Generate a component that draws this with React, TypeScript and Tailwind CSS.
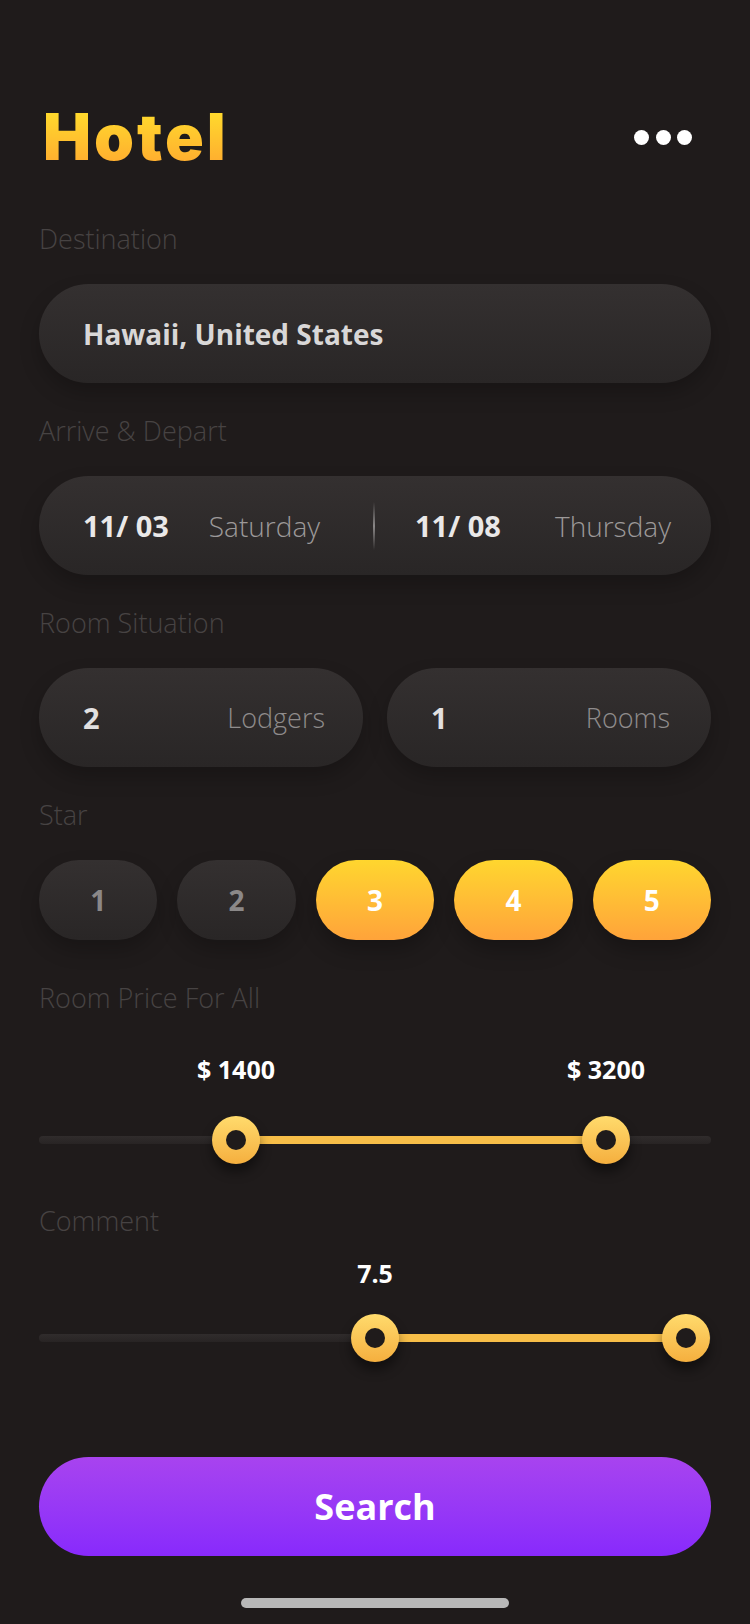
import React from "react";

const FONT = { fontFamily: '"Open Sans", "Liberation Sans", sans-serif' };

function Label({ children }: { children: React.ReactNode }) {
  return (
    <div className="h-[30px] flex items-center text-[27px] font-light text-[#474343] leading-none">
      {children}
    </div>
  );
}

function Handle({ left }: { left: number }) {
  return (
    <div
      className="absolute top-0 w-[48px] h-[48px] -ml-[24px] rounded-full bg-gradient-to-b from-[#FFDB6C] to-[#F5AF3E] flex items-center justify-center shadow-[0_8px_12px_rgba(0,0,0,0.45)]"
      style={{ left: `${left}%` }}
    >
      <div className="w-[20px] h-[20px] rounded-full bg-[#1f1b1b]" />
    </div>
  );
}

function Track({ a, b }: { a: number; b: number }) {
  const pa = ((a - 39) / 672) * 100;
  const pb = ((b - 39) / 672) * 100;
  return (
    <div className="relative h-[48px]">
      <div className="absolute left-0 right-0 top-[20px] h-[8px] rounded-full bg-gradient-to-b from-[#302c2c] to-[#282424]" />
      <div
        className="absolute top-[20px] h-[8px] bg-[#F7BE48]"
        style={{ left: `${pa}%`, width: `${pb - pa}%` }}
      />
      <Handle left={pa} />
      <Handle left={pb} />
    </div>
  );
}

function Values({ items }: { items: { x: number; text: string }[] }) {
  return (
    <div className="relative h-[30px]">
      {items.map((l) => (
        <div
          key={l.text}
          className="absolute top-0 h-[30px] flex items-center -translate-x-1/2 whitespace-nowrap text-[25px] font-bold text-white leading-none"
          style={{ left: `${((l.x - 39) / 672) * 100}%` }}
        >
          {l.text}
        </div>
      ))}
    </div>
  );
}

const box =
  "rounded-full bg-gradient-to-b from-[#343030] to-[#292626] shadow-[0_10px_20px_rgba(0,0,0,0.22)]";

export default function App() {
  return (
    <div
      className="w-[750px] h-[1624px] bg-[#1f1b1b] overflow-hidden"
      style={FONT}
    >
      <div className="px-[39px]">
        {/* Header */}
        <div className="mt-[107px] h-[60px] flex items-center justify-between">
          <div
            className="ml-[4px] text-[64px] font-black leading-none tracking-[3px] bg-gradient-to-b from-[#FFE02C] to-[#FFA82F] bg-clip-text text-transparent"
            style={{ fontFamily: 'Inter, "DejaVu Sans", sans-serif' }}
          >
            Hotel
          </div>
          <div className="mr-[19px] flex items-center gap-[6.5px]">
            <div className="w-[15px] h-[15px] rounded-full bg-white" />
            <div className="w-[15px] h-[15px] rounded-full bg-white" />
            <div className="w-[15px] h-[15px] rounded-full bg-white" />
          </div>
        </div>

        {/* Destination */}
        <div className="mt-[56px]">
          <Label>Destination</Label>
        </div>
        <div className={`mt-[31px] h-[99px] ${box} flex items-center pl-[44px]`}>
          <span className="text-[28px] font-bold text-[#d9d7d7] leading-none">
            Hawaii, United States
          </span>
        </div>

        {/* Arrive & Depart */}
        <div className="mt-[32px]">
          <Label>Arrive &amp; Depart</Label>
        </div>
        <div className={`mt-[31px] h-[99px] ${box} flex items-center`}>
          <div className="w-[334px] flex items-center pl-[44px]">
            <span className="text-[29px] font-bold text-[#eae8e8] leading-none">
              11/ 03
            </span>
            <span className="ml-[40px] text-[28px] font-light text-[#9c9999] leading-none">
              Saturday
            </span>
          </div>
          <div className="w-[2px] h-[48px] bg-gradient-to-b from-transparent via-[#8a8787] to-transparent" />
          <div className="flex-1 flex items-center justify-between pl-[40px] pr-[40px]">
            <span className="text-[29px] font-bold text-[#eae8e8] leading-none">
              11/ 08
            </span>
            <span className="text-[28px] font-light text-[#9c9999] leading-none">
              Thursday
            </span>
          </div>
        </div>

        {/* Room Situation */}
        <div className="mt-[32px]">
          <Label>Room Situation</Label>
        </div>
        <div className="mt-[31px] grid grid-cols-2 gap-[24px]">
          <div className={`h-[99px] ${box} flex items-center justify-between pl-[44px] pr-[38px]`}>
            <span className="text-[29px] font-bold text-[#e2e0e0] leading-none">2</span>
            <span className="text-[27px] font-light text-[#8f8c8c] leading-none">
              Lodgers
            </span>
          </div>
          <div className={`h-[99px] ${box} flex items-center justify-between pl-[44px] pr-[41px]`}>
            <span className="text-[29px] font-bold text-[#e2e0e0] leading-none">1</span>
            <span className="text-[27px] font-light text-[#8f8c8c] leading-none">
              Rooms
            </span>
          </div>
        </div>

        {/* Star */}
        <div className="mt-[32px]">
          <Label>Star</Label>
        </div>
        <div className="mt-[31px] grid grid-cols-5 gap-[20px]">
          {[1, 2, 3, 4, 5].map((n) =>
            n < 3 ? (
              <div
                key={n}
                className={`h-[80px] ${box} flex items-center justify-center text-[28px] font-bold text-[#8b8888] leading-none`}
              >
                {n}
              </div>
            ) : (
              <div
                key={n}
                className="h-[80px] rounded-full bg-gradient-to-b from-[#FFD62E] to-[#FFA33A] flex items-center justify-center text-[28px] font-bold text-white leading-none shadow-[0_10px_20px_rgba(0,0,0,0.25)]"
              >
                {n}
              </div>
            )
          )}
        </div>

        {/* Room Price */}
        <div className="mt-[42px]">
          <Label>Room Price For All</Label>
        </div>
        <div className="mt-[42px]">
          <Values
            items={[
              { x: 236, text: "$ 1400" },
              { x: 606, text: "$ 3200" },
            ]}
          />
        </div>
        <div className="mt-[32px]">
          <Track a={236} b={606} />
        </div>

        {/* Comment */}
        <div className="mt-[41px]">
          <Label>Comment</Label>
        </div>
        <div className="mt-[23px]">
          <Values items={[{ x: 375, text: "7.5" }]} />
        </div>
        <div className="mt-[26px]">
          <Track a={375} b={686} />
        </div>

        {/* Search */}
        <button className="mt-[95px] w-full h-[99px] rounded-full bg-gradient-to-b from-[#A843EF] to-[#8829FC] flex items-center justify-center text-[36px] font-bold text-white leading-none">
          Search
        </button>

        <div className="mt-[42px] mx-auto w-[268px] h-[10px] rounded-full bg-[#b8b8b8]" />
      </div>
    </div>
  );
}
